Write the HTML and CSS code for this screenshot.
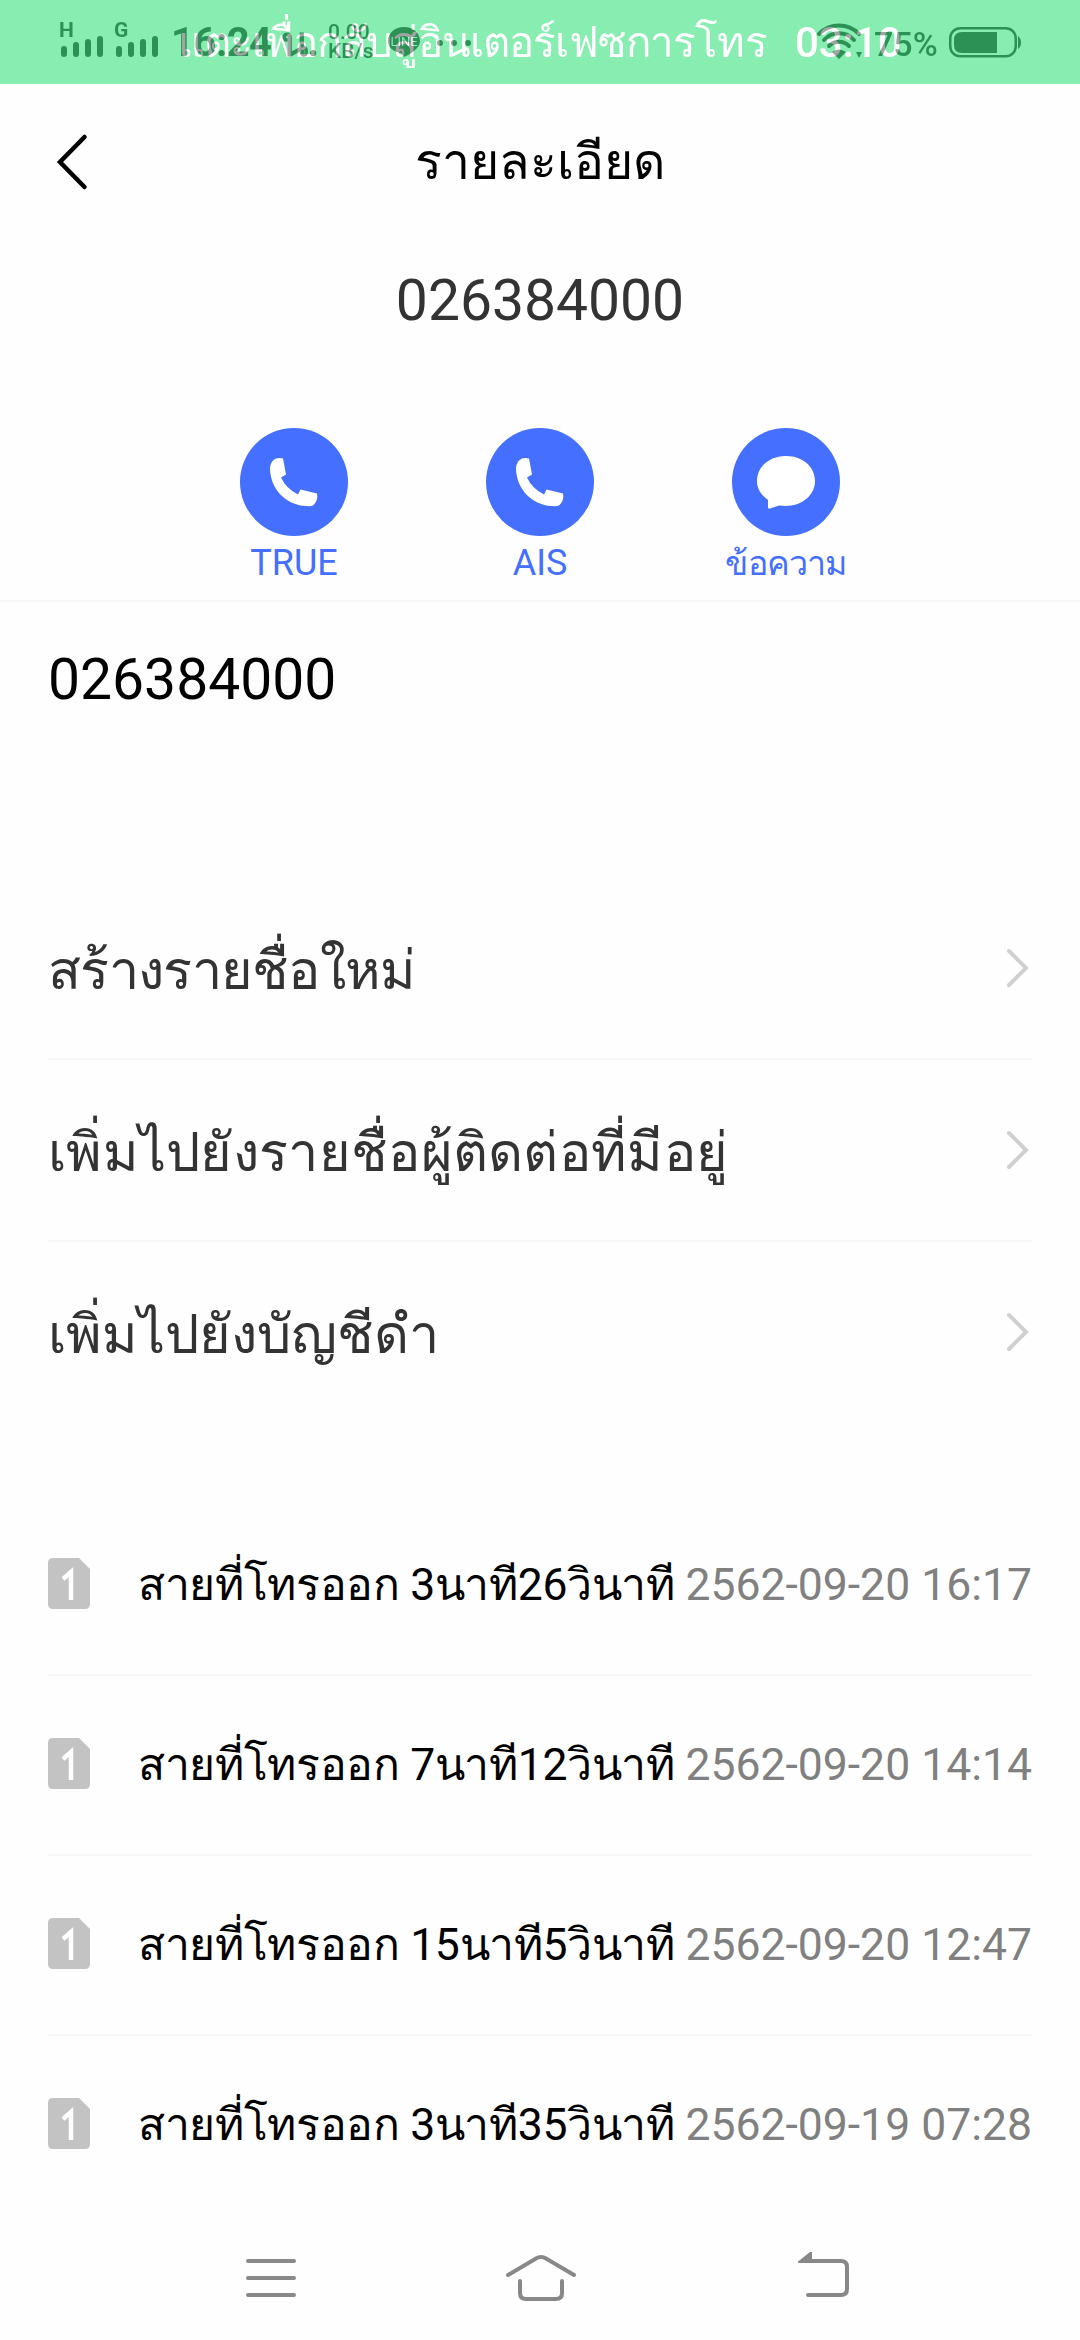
FILE: index.html
```html
<!DOCTYPE html>
<html lang="th">
<head>
  <meta charset="UTF-8">
  <meta name="viewport" content="width=device-width, initial-scale=1.0">
  <title>รายละเอียด</title>
  <link rel="stylesheet" href="styles.css">
</head>
<body>
  <!-- Call bar with the system status on top of it -->
  <div class="call-bar">
    <span class="call-text">แตะเพื่อกลับสู่อินเตอร์เฟซการโทร</span>
    <span class="call-time">03:10</span>

    <div class="status">
      <svg class="signal" width="102" height="40" viewBox="0 0 102 40">
        <path d="M3 29v5M15 25v9M27 22v12M39 19v15M58 29v5M70 25v9M82 22v12M94 19v15"></path>
      </svg>
      <span class="net net-h">H</span>
      <span class="net net-g">G</span>
      <span class="clock">16:24 น.</span>
      <span class="speed">0.00<br>KB/s</span>
      <svg class="line-app" width="32" height="32" viewBox="0 0 32 32">
        <path d="M16 0C7 0 0 6 0 14c0 7 6 11 13 12l3 4c7-3 16-9 16-16C32 6 25 0 16 0z"></path>
        <text x="16" y="19" text-anchor="middle">LINE</text>
      </svg>
      <svg class="dots" width="36" height="8" viewBox="0 0 36 8">
        <circle cx="4" cy="4" r="3"></circle>
        <circle cx="18" cy="4" r="3"></circle>
        <circle cx="32" cy="4" r="3"></circle>
      </svg>
      <svg class="wifi" width="48" height="36" viewBox="0 0 48 36">
        <path d="M3 10a28 28 0 0 1 40 0M8 16a20 20 0 0 1 30 0M13 22a14 14 0 0 1 20 0"></path>
        <path class="solid" d="M16 28q7-5 14 0l-7 7zM40 28h6l-3 6z"></path>
      </svg>
      <span class="battery-text">75%</span>
      <svg class="battery" width="72" height="31" viewBox="0 0 72 31">
        <rect class="case" x="1.25" y="1.25" width="65.5" height="28" rx="10"></rect>
        <path class="solid" d="M13 5h35v21H13q-8 0-8-8v-5q0-8 8-8zM69 9q3 2 3 6.500t-3 6.500z"></path>
      </svg>
    </div>
  </div>

  <header class="header">
    <svg class="back" width="30" height="56" viewBox="0 0 30 56">
      <path d="M27.500 3L3 28l24.500 25"></path>
    </svg>
    <h1>รายละเอียด</h1>
  </header>

  <section class="contact">
    <div class="contact-number">026384000</div>
    <div class="actions">
      <a class="action">
        <svg width="108" height="108" viewBox="0 0 108 108">
          <circle cx="54" cy="54" r="54"></circle>
          <path d="M36 30.500q3.500-1 7 0l3 16-5 3q5 11 17 17l2.500-5 16.500 4q1.500 7-4 12-2 1-7 .5C45 77 30 60 30 40q.5-7 6-9.500z"></path>
        </svg>
        <span>TRUE</span>
      </a>
      <a class="action">
        <svg width="108" height="108" viewBox="0 0 108 108">
          <circle cx="54" cy="54" r="54"></circle>
          <path d="M36 30.500q3.500-1 7 0l3 16-5 3q5 11 17 17l2.500-5 16.500 4q1.500 7-4 12-2 1-7 .5C45 77 30 60 30 40q.5-7 6-9.500z"></path>
        </svg>
        <span>AIS</span>
      </a>
      <a class="action">
        <svg width="108" height="108" viewBox="0 0 108 108">
          <circle cx="54" cy="54" r="54"></circle>
          <path d="M54 28c-17 0-29 11-29 25 0 8 4 14 11 19v8q1 1 2 .5l9-3c19 3 36-8 36-24.500C83 39 71 28 54 28z"></path>
        </svg>
        <span class="message">ข้อความ</span>
      </a>
    </div>
  </section>

  <div class="number">026384000</div>

  <ul class="options">
    <li>
      <span class="create">สร้างรายชื่อใหม่</span>
      <svg class="arrow" width="24" height="40" viewBox="0 0 24 40"><path d="M3 3l17 17L3 37"></path></svg>
    </li>
    <li>
      <span class="add">เพิ่มไปยังรายชื่อผู้ติดต่อที่มีอยู่</span>
      <svg class="arrow" width="24" height="40" viewBox="0 0 24 40"><path d="M3 3l17 17L3 37"></path></svg>
    </li>
    <li>
      <span>เพิ่มไปยังบัญชีดำ</span>
      <svg class="arrow" width="24" height="40" viewBox="0 0 24 40"><path d="M3 3l17 17L3 37"></path></svg>
    </li>
  </ul>

  <!-- Call history -->
  <ul class="calls">
    <li>
      <svg class="sim" width="42" height="51" viewBox="0 0 42 51"><path d="M5 0h26l11 11v35q0 5-5 5H5q-5 0-5-5V5q0-5 5-5z"></path><path class="one" d="M15 21l8-7v28"></path></svg>
      <span class="call-type">สายที่โทรออก 3นาที26วินาที</span>
      <span class="date">2562-09-20 16:17</span>
    </li>
    <li>
      <svg class="sim" width="42" height="51" viewBox="0 0 42 51"><path d="M5 0h26l11 11v35q0 5-5 5H5q-5 0-5-5V5q0-5 5-5z"></path><path class="one" d="M15 21l8-7v28"></path></svg>
      <span class="call-type">สายที่โทรออก 7นาที12วินาที</span>
      <span class="date">2562-09-20 14:14</span>
    </li>
    <li>
      <svg class="sim" width="42" height="51" viewBox="0 0 42 51"><path d="M5 0h26l11 11v35q0 5-5 5H5q-5 0-5-5V5q0-5 5-5z"></path><path class="one" d="M15 21l8-7v28"></path></svg>
      <span class="call-type">สายที่โทรออก 15นาที5วินาที</span>
      <span class="date">2562-09-20 12:47</span>
    </li>
    <li>
      <svg class="sim" width="42" height="51" viewBox="0 0 42 51"><path d="M5 0h26l11 11v35q0 5-5 5H5q-5 0-5-5V5q0-5 5-5z"></path><path class="one" d="M15 21l8-7v28"></path></svg>
      <span class="call-type">สายที่โทรออก 3นาที35วินาที</span>
      <span class="date">2562-09-19 07:28</span>
    </li>
  </ul>

  <nav class="nav">
    <svg width="72" height="48" viewBox="0 0 72 48"><path d="M13 6h46M13 23h46M13 40h46"></path></svg>
    <svg class="home" width="72" height="48" viewBox="0 0 72 48"><path d="M3 20L31 3.500q5-3 10 0L69 20M15 26v12q0 6 6 6h30q6 0 6-6V26"></path></svg>
    <svg class="return" width="72" height="48" viewBox="0 0 72 48"><path d="M13 6h38q6 0 6 6v22q0 6-6 6H18"></path><path class="solid" d="M8 7q0-1 2-2l10-8h2v11H8z"></path></svg>
  </nav>
</body>
</html>
```

FILE: styles.css
```css
* {
  margin: 0;
  padding: 0;
  box-sizing: border-box;
}

body {
  width: 1080px;
  height: 2340px;
  background: #fefefe;
  color: #000;
  font-family: Roboto, sans-serif;
  display: flex;
  flex-direction: column;
  overflow: hidden;
}

ul {
  list-style: none;
}

svg {
  display: block;
  flex: none;
  overflow: visible;
}

/* Call bar */
.call-bar {
  position: relative;
  height: 84px;
  flex: none;
  background: #87edb0;
  color: #fff;
  display: flex;
  align-items: center;
  padding: 2px 0 0 178px;
  gap: 32px;
  font-size: 42px;
  line-height: 50px;
  white-space: nowrap;
  isolation: isolate;
}

.call-text {
  width: 585px;
  letter-spacing: -0.85px;
}

.call-time {
  font-weight: 500;
}

/* Status icons lie over the call text */
.status {
  position: absolute;
  inset: 0;
  color: #5c5c5c;
  mix-blend-mode: difference;
}

.status > * {
  position: absolute;
}

.status path,
.status circle {
  fill: #5c5c5c;
}

.status .signal {
  left: 61px;
  top: 20px;
}

.status .signal path {
  fill: none;
  stroke: #5c5c5c;
  stroke-width: 6;
  stroke-linecap: round;
}

.net {
  top: 20px;
  font-size: 21px;
  line-height: 21px;
  font-weight: 700;
}

.net-h {
  left: 59px;
}

.net-g {
  left: 114px;
}

.clock {
  left: 171px;
  top: 20px;
  font-size: 40px;
  line-height: 46px;
  font-weight: 700;
  letter-spacing: -0.5px;
}

.speed {
  left: 328px;
  top: 23px;
  font-size: 21px;
  line-height: 19px;
  font-weight: 500;
}

.line-app {
  left: 388px;
  top: 27px;
}

.line-app text {
  font-size: 13px;
  fill: #000;
}

.dots {
  left: 436px;
  top: 39px;
}

.wifi {
  left: 816px;
  top: 24px;
}

.status .wifi path {
  fill: none;
  stroke: #5c5c5c;
  stroke-width: 4;
  stroke-linecap: round;
}

.status .wifi .solid {
  fill: #5c5c5c;
  stroke: none;
}

.battery-text {
  left: 874px;
  top: 25px;
  font-size: 34px;
  line-height: 38px;
  font-weight: 500;
}

.battery {
  left: 949px;
  top: 27px;
}

.battery .case {
  fill: none;
  stroke: #5c5c5c;
  stroke-width: 2.5;
}

/* Header */
.header {
  height: 156px;
  flex: none;
  display: flex;
  align-items: center;
  padding-left: 57px;
}

.header h1 {
  flex: 1;
  margin-right: 87px;
  text-align: center;
  font-size: 50px;
  line-height: 70px;
  font-weight: 400;
}

.back path {
  fill: none;
  stroke: #000;
  stroke-width: 4.5;
  stroke-linecap: round;
}

/* Contact */
.contact {
  height: 362px;
  flex: none;
  border-bottom: 2px solid #f7f7f7;
  padding-top: 21px;
}

.contact-number {
  text-align: center;
  font-size: 57px;
  line-height: 80px;
  color: #333;
}

.actions {
  display: flex;
  justify-content: center;
  gap: 66px;
  margin-top: 87px;
}

.action {
  width: 180px;
  display: flex;
  flex-direction: column;
  align-items: center;
  font-size: 36px;
  line-height: 54px;
  color: #456fff;
  white-space: nowrap;
}

.action .message {
  font-size: 34px;
  letter-spacing: -0.8px;
}

.action circle {
  fill: #456fff;
}

.action path {
  fill: #fff;
}

.number {
  height: 276px;
  flex: none;
  padding: 37px 48px 0;
  font-size: 57px;
  line-height: 82px;
}

/* Options */
.options {
  padding: 0 48px;
  flex: none;
  color: #333;
  font-size: 54px;
  line-height: 80px;
}

.options li {
  height: 182px;
  display: flex;
  align-items: center;
  justify-content: space-between;
  border-bottom: 2px solid #f7f7f7;
  white-space: nowrap;
}

.options li:last-child {
  border-bottom-color: transparent;
}

.options span {
  padding-top: 5px;
}

.options .create {
  letter-spacing: -0.7px;
}

.options .add {
  letter-spacing: 0.3px;
}

.arrow {
  margin-right: 2px;
}

.arrow path {
  fill: none;
  stroke: #d0d0d0;
  stroke-width: 4;
  stroke-linecap: round;
}

/* Calls */
.calls {
  padding: 0 48px;
  margin-top: 72px;
  flex: none;
  font-size: 44.5px;
  line-height: 60px;
}

.calls li {
  height: 180px;
  display: flex;
  align-items: center;
  border-bottom: 2px solid #f7f7f7;
  white-space: nowrap;
}

.calls li:last-child {
  border-bottom-color: transparent;
}

.sim {
  margin-top: -3px;
}

.sim path {
  fill: #c3c3c3;
}

.sim .one {
  fill: none;
  stroke: #fff;
  stroke-width: 4.5;
}

.call-type {
  margin-left: 48px;
  letter-spacing: -0.35px;
}

.date {
  margin-left: auto;
  color: #808080;
}

/* Navigation */
.nav {
  height: 126px;
  margin-top: auto;
  flex: none;
  display: flex;
  padding: 40px 0 0 235px;
}

.nav svg {
  margin-top: -1px;
}

.nav .home {
  margin-left: 198px;
}

.nav .return {
  margin-left: 213px;
}

.nav path {
  fill: none;
  stroke: #888;
  stroke-width: 4;
  stroke-linecap: round;
}

.nav .solid {
  fill: #888;
  stroke: none;
}
```
